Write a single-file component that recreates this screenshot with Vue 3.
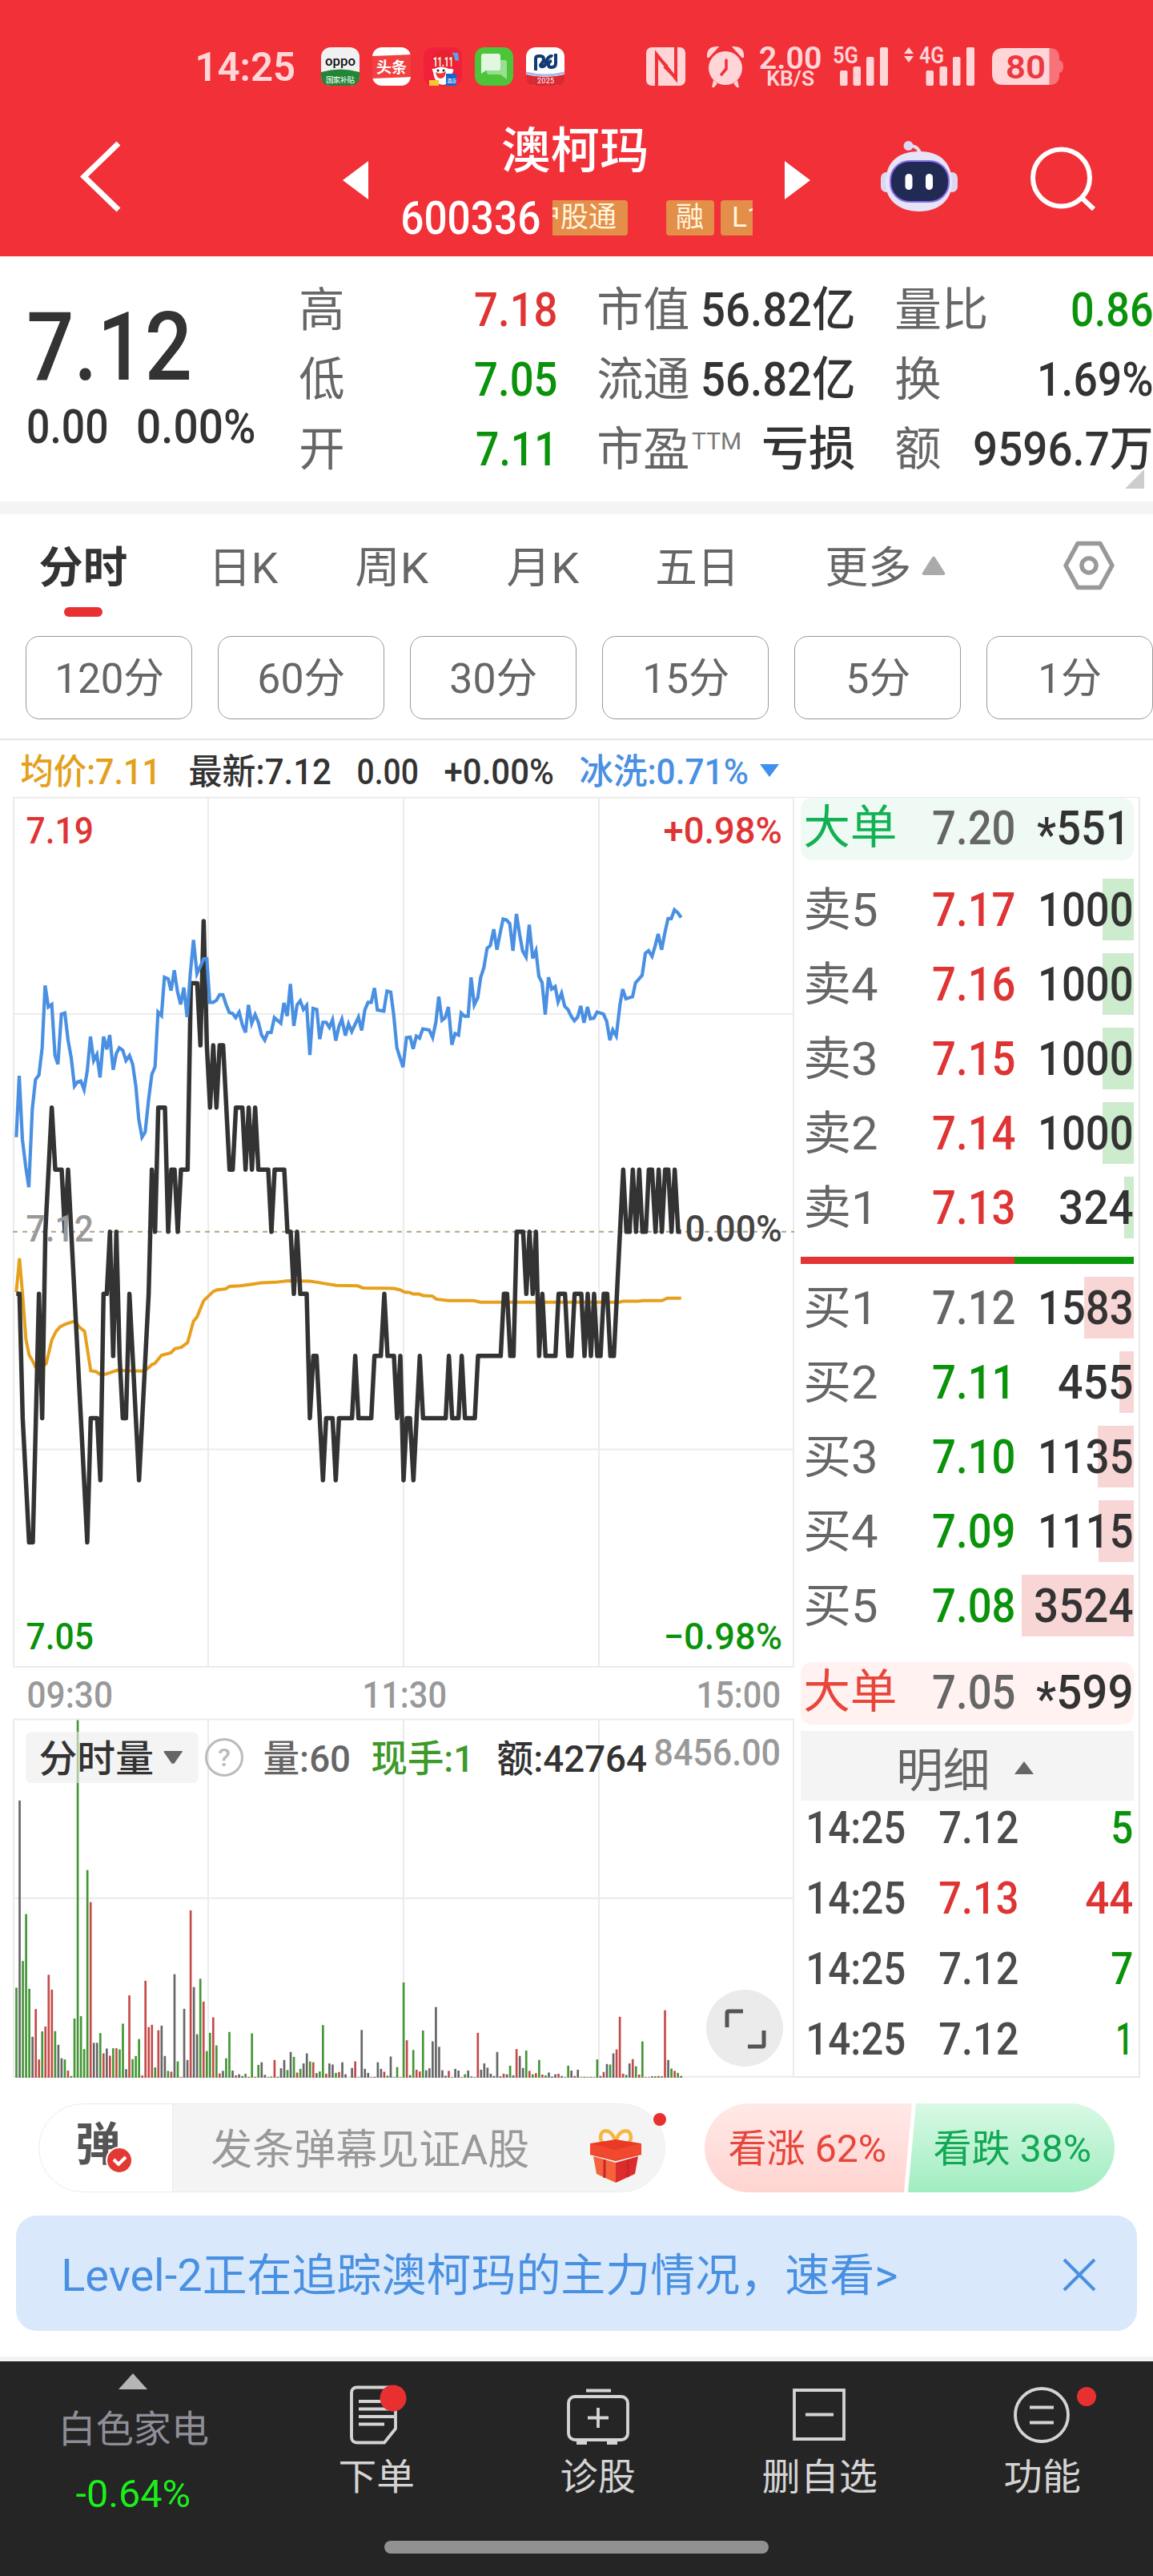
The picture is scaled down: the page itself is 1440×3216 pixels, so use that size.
<script setup>
import { h } from 'vue'

// Single line of text fitted to an exact ink width; its box ends on the baseline.
// A leading asterisk is lowered to sit on the middle of the digits.
const T = (p) =>
  h('svg', { class: 't', width: p.w, height: p.s * 0.72, 'font-size': p.s }, [
    h('text', {
      x: -p.s * 0.032, y: p.s * 0.72, fill: 'currentColor',
      textLength: +p.w + p.s * 0.075, lengthAdjust: 'spacingAndGlyphs', 'xml:space': 'preserve'
    }, p.t[0] === '*'
      ? [h('tspan', { dy: p.s * 0.13 }, '*'), h('tspan', { dy: -p.s * 0.13 }, p.t.slice(1))]
      : p.t)
  ])
T.props = ['t', 'w', 's']

const quotes = [
  [['高', 53, '7.18', 100, 'red'], ['低', 53, '7.05', 100, 'green'], ['开', 53, '7.11', 98, 'green']],
  [['市值', 112, '56.82亿', 189, ''], ['流通', 112, '56.82亿', 189, ''], ['市盈', 112, '亏损', 113, '', 'TTM']],
  [['量比', 113, '0.86', 99, 'green'], ['换', 54, '1.69%', 141, ''], ['额', 54, '9596.7万', 221, '']]
]
const tabs = [['分时', 107], ['日K', 83], ['周K', 88], ['月K', 87], ['五日', 101], ['更多', 104]]
const chips = [['120分', 133], ['60分', 106], ['30分', 106], ['15分', 105], ['5分', 77], ['1分', 76]]
const sells = [
  ['卖5', '7.17', '1000', 115, 39], ['卖4', '7.16', '1000', 115, 39], ['卖3', '7.15', '1000', 115, 39],
  ['卖2', '7.14', '1000', 115, 39], ['卖1', '7.13', '324', 89, 12]
]
const buys = [
  ['买1', '7.12', '1583', 115, 62, 'mid'], ['买2', '7.11', '455', 90, 18, 'green'], ['买3', '7.10', '1135', 115, 45, 'green'],
  ['买4', '7.09', '1115', 115, 44, 'green'], ['买5', '7.08', '3524', 120, 140, 'green']
]
const trades = [['7.12', '5', 24, 'green'], ['7.13', '44', 56, 'red'], ['7.12', '7', 24, 'green'], ['7.12', '1', 18, 'green']]

// Price samples: x position and distance from the previous close in ticks.
const price = '61:-1 73:-1 85:-3 109:-5 123:-5 146:-1 158:-3 170:0 194:2 207:1 231:1 243:0 255:1 279:-1 327:-5 340:-3 364:-3 376:-4 388:-1 400:-1 412:0 424:-2 436:0 448:-2 460:-3 472:-3 485:-1 509:-3 521:-4 545:-2 557:-1 569:1 581:0 593:2 618:2 630:0 642:1 654:1 666:0 678:1 703:1 715:4 739:4 751:3 763:5 775:3 787:2 799:3 811:2 823:3 836:3 860:1 872:1 884:2 908:2 920:1 932:2 944:1 956:2 968:1 1005:1 1017:0 1029:1 1065:1 1077:0 1089:0 1101:-1 1113:0 1125:-1 1149:-1 1161:-3 1174:-2 1186:-2 1210:-4 1222:-3 1246:-3 1258:-4 1270:-3 1319:-3 1331:-2 1343:-3 1391:-3 1403:-2 1427:-2 1440:-1 1452:-2 1476:-2 1488:-3 1500:-2 1512:-4 1524:-3 1536:-3 1549:-4 1573:-2 1585:-3 1670:-3 1682:-2 1694:-3 1718:-3 1730:-2 1742:-3 1779:-3 1791:-2 1876:-2 1888:-1 1900:-1 1912:-2 1924:-2 1936:0 1960:0 1972:-1 1984:0 1996:-1 2008:0 2020:-2 2032:-1 2044:-2 2081:-2 2093:-1 2117:-1 2129:-2 2141:-2 2153:-1 2178:-1 2190:-2 2202:-1 2214:-2 2226:-1 2238:-2 2250:-2 2262:-1 2275:-1 2287:-2 2300:-2 2323:0 2335:1 2347:0 2359:0 2371:1 2383:0 2395:1 2407:0 2420:0 2431:1 2443:1 2456:0 2468:1 2480:0 2492:1 2504:1 2516:0 2528:1 2541:0 2552:0'
  .split(' ').map((p) => { const [x, v] = p.split(':'); return `${x},${875 - v * 121.6}` }).join(' ')

const indicator = '61,690 72,570 84,695 97,750 108,788 121,635 133,577 146,568 158,515 169,393 181,435 194,430 206,530 217,547 230,449 243,447 255,500 267,535 279,590 290,582 303,580 315,597 327,560 339,493 351,540 363,528 375,573 388,493 400,518 411,490 424,558 436,526 447,515 460,520 472,540 485,530 497,547 509,590 520,655 532,690 544,680 557,615 569,567 581,552 592,445 605,452 616,377 630,380 641,403 653,363 665,405 677,430 689,397 701,455 713,370 725,304 738,370 751,355 763,341 775,341 786,426 799,426 811,422 823,411 835,411 847,430 859,446 872,448 883,456 896,445 908,470 920,485 931,431 943,467 956,450 968,465 980,490 992,500 1003,485 1016,485 1028,456 1052,467 1064,427 1076,453 1088,390 1101,472 1113,431 1125,423 1137,440 1149,432 1161,529 1173,438 1187,440 1198,498 1210,465 1222,465 1234,475 1246,460 1258,501 1270,473 1281,459 1294,491 1306,468 1318,483 1343,455 1355,481 1367,441 1379,426 1391,426 1403,398 1414,441 1438,443 1450,404 1464,406 1475,450 1487,515 1510,553 1523,495 1537,494 1548,517 1560,492 1572,496 1584,478 1608,480 1621,495 1633,465 1644,415 1656,461 1668,456 1680,435 1693,509 1705,487 1718,490 1728,447 1741,453 1754,453 1765,377 1777,431 1790,417 1801,377 1813,358 1825,320 1837,315 1850,283 1862,323 1874,290 1885,263 1898,265 1910,272 1922,325 1935,253 1947,293 1958,325 1971,337 1983,274 1996,340 2008,325 2019,375 2031,387 2043,450 2055,377 2067,400 2080,395 2091,425 2104,408 2116,434 2128,440 2140,453 2152,462 2164,455 2176,433 2188,466 2201,435 2212,458 2225,457 2237,445 2261,449 2273,463 2285,500 2296,480 2309,492 2323,430 2333,400 2345,419 2370,415 2381,388 2406,373 2418,330 2430,325 2443,336 2455,315 2466,292 2479,323 2491,290 2503,262 2515,262 2527,245 2540,251 2552,260'
const average = '61,993 73,927 85,1000 97,1085 109,1116 121,1127 133,1140 150,1143 173,1133 194,1087 210,1070 225,1061 245,1056 280,1050 300,1063 317,1070 340,1147 360,1149 380,1156 400,1153 440,1146 470,1147 535,1148 555,1142 569,1135 580,1133 605,1117 640,1112 655,1104 680,1101 703,1092 725,1050 738,1042 763,1010 799,992 811,989 845,987 860,982 900,981 940,978 980,975 1030,974 1080,971 1160,972 1190,974 1210,976 1260,980 1340,981 1360,985 1475,986 1500,989 1515,993 1535,994 1548,997 1570,997 1585,1000 1620,1001 1635,1007 1680,1010 1775,1010 1800,1013 2320,1013 2335,1011 2390,1011 2410,1010 2480,1010 2500,1005 2552,1005'

// One bar per minute: colour key (g falling, r rising, k flat) and height.
const volume = 'g315 k969 g408 g572 g311 k143 r240 r64 g162 r179 r360 r308 g163 k115 k68 g64 r25 g6 g207 g1250 g215 g100 g726 r614 k122 k122 g156 r85 k102 r77 g103 r103 g99 g189 k30 r288 g65 g76 g135 r8 r339 r177 r185 g36 r166 k182 k76 g24 r21 k362 g57 r2 k241 k62 r585 k317 k152 g346 r266 g93 g157 r211 g113 r15 k24 g68 g160 k25 r8 k12 k6 g14 r3 g155 r3 g45 k54 k10 k2 g4 r62 k3 k33 k62 g27 k90 g73 r18 g31 k50 k85 g57 r54 k16 g22 g184 r14 k50 k46 g17 r20 k54 k12 k0 k34 r57 g2 k167 k31 k17 k2 r3 k54 k31 r21 g7 k74 k2 g37 r2 g333 r131 k9 g97 r28 r22 g165 k26 k33 k127 k247 k108 k26 k7 r24 g2 k31 k25 r2 g12 k25 k4 k2 r157 k28 k50 k35 k14 k6 k90 k5 r14 k12 g42 k8 r100 k76 k34 g95 r24 g12 r16 g62 r11 g8 k18 k4 k12 r14 k6 k2 g42 k25 r6 k28 k2 g3 r2 g3 r2 g64 k6 r20 k48 g46 k85 r99 r213 r14 g10 k50 r65 g40 r11 g127 r2 r2 k5 g5 r6 g5 r236 k62 g32 r24 g17 k6'
  .split(' ').map((v, i) => ({ x: 57.5 + i * 12.09, k: v[0], n: +v.slice(1) }))
const ink = { g: '#449636', r: '#c54a48', k: '#666' }
</script>

<template>
  <div class="app">
    <header class="top">
      <div class="status">
        <T t="14:25" w="122" s="50" class="b" />
        <div class="apps">
          <svg width="48" height="48"><rect width="48" height="48" rx="12" fill="#f1f1f1" /><path d="M0 31q24-7 48 0v5q0 12-12 12H12Q0 48 0 36z" fill="#238636" /><text x="5" y="23" font-size="17" textLength="38" lengthAdjust="spacingAndGlyphs" fill="#111" font-weight="500">oppo</text><text x="6" y="43.500" font-size="9.500" textLength="36" fill="#fff">国家补贴</text></svg>
          <svg width="48" height="48"><rect width="48" height="48" rx="12" fill="#fff" /><path d="M0 11L48 9V37L0 39z" fill="#f1403f" /><text x="5" y="32" font-size="19" textLength="38" fill="#fff" font-weight="700">头条</text></svg>
          <svg width="48" height="48"><rect width="48" height="48" rx="12" fill="#f2203a" /><path d="M36 7h7l1 10-8-1z" fill="#57a4e8" /><ellipse cx="25" cy="15" rx="14" ry="11" fill="#e5232c" /><text x="12" y="24" font-size="16" textLength="25" lengthAdjust="spacingAndGlyphs" fill="#fff" font-weight="700">11.11</text><path d="M12 31q-3-5 1-4 9-5 19 0 8-1 4 5 0 14-12 15-10-1-12-16z" fill="#fff" /><path d="M15 31q6 4 13-1-1 9-7 9-5-1-6-8z" fill="#e33" /><circle cx="18" cy="29" r="1.500" fill="#222" /><circle cx="25" cy="29" r="1.500" fill="#222" /><rect x="7" y="41" width="12" height="7" fill="#f7c52c" /><rect x="28" y="33" width="13" height="15" fill="#1766cf" /><text x="29" y="44" font-size="6" fill="#fff">酒店</text></svg>
          <svg width="48" height="48"><rect width="48" height="48" rx="12" fill="#4cc53a" /><path d="M18 16h19q3 0 3 3v21l-8-6H18q-3 0-3-3V19q0-3 3-3z" fill="#9ade93" /><path d="M11 8h18q3 0 3 3v15q0 3-3 3H14l-6 4V11q0-3 3-3z" fill="#e2f7df" /></svg>
          <svg width="48" height="48"><rect width="48" height="48" rx="12" fill="#fff" /><path d="M0 34q24 6 48 0v4q0 10-12 10H12Q0 48 0 37z" fill="#d82a34" /><path d="M0 32q24 6 48 0" stroke="#a9b9e8" stroke-width="3" fill="none" /><path d="M12 29V14q0-3 4-3h2q4 0 4 4 0 3-3 6-2 2 0 3 4 1 6-4 0-4 3-7 3-3 5-1" fill="none" stroke="#123a73" stroke-width="4" /><path d="M37 8v12q0 5-5 5-5 0-4-4 0-3 4-4" fill="none" stroke="#123a73" stroke-width="4" /><text x="14" y="45" font-size="9" textLength="21" fill="#fff">2025</text></svg>
        </div>
        <svg class="nfc" width="49" height="48" viewBox="0 0 49 48"><rect width="49" height="48" rx="7" fill="currentColor" /><path d="M13 48V9L37 39V0M13 10L26 24M37 38L23 24" fill="none" stroke="#f13038" stroke-width="4" /></svg>
        <svg class="alarm" width="48" height="52" viewBox="0 0 48 52"><g fill="currentColor"><circle cx="24" cy="28" r="21" /><path d="M2 14Q1 2 14 2L3 14zM46 14Q47 2 34 2l11 12z" stroke="currentColor" stroke-width="2" /><path d="M9 43l5 4-4 5H7zM39 43l-5 4 4 5h3z" /></g><path d="M25 18v11l-6 7" fill="none" stroke="#f13038" stroke-width="3.500" stroke-linecap="round" /></svg>
        <div class="speed b"><T t="2.00" w="76" s="38" /><T t="KB/S" w="58" s="25" /></div>
        <svg class="sig" width="68" height="50" viewBox="0 0 68 50" fill="currentColor"><text x="-1" y="21" font-size="29" textLength="32" lengthAdjust="spacingAndGlyphs" font-weight="600">5G</text><rect x="8" y="30" width="9.500" height="19" rx="2" /><rect x="24.500" y="25" width="9.500" height="24" rx="2" /><rect x="41" y="13" width="9.500" height="36" rx="2" /><rect x="58" y="1" width="10" height="48" rx="2" /></svg>
        <svg class="sig2" width="88" height="50" viewBox="0 0 88 50" fill="currentColor"><path d="M0 9L6 1l6 8zM0 12h12l-6 8z" /><text x="19" y="21" font-size="29" textLength="31" lengthAdjust="spacingAndGlyphs" font-weight="600">4G</text><rect x="27.500" y="30" width="9.500" height="19" rx="2" /><rect x="44.500" y="25" width="9.500" height="24" rx="2" /><rect x="61" y="13" width="9.500" height="36" rx="2" /><rect x="78" y="1" width="10" height="48" rx="2" /></svg>
        <svg class="bat" width="88" height="46" viewBox="0 0 88 46"><path d="M71 0h1q12 0 12 12v3q5 1 5 8t-5 8v3q0 12-12 12h-1z" fill="#f87279" /><path d="M14 0h57.500v46H14Q0 46 0 32V14Q0 0 14 0z" fill="currentColor" /><text x="17" y="38" font-size="41" textLength="50" lengthAdjust="spacingAndGlyphs" fill="#ec3840" font-weight="600">80</text></svg>
      </div>
      <nav class="nav">
        <svg class="back" width="52" height="100" viewBox="100 175 52 100"><path d="M148 179L105 220.500 148 262" fill="none" stroke="#fff" stroke-width="7" /></svg>
        <svg class="prev" width="32" height="48"><path d="M32 0v48L0 24z" fill="#fff" /></svg>
        <div class="stock">
          <T t="澳柯玛" w="180" s="61.500" class="name m" />
          <div class="code">
            <T t="600336" w="171" s="57" class="m" />
            <div class="tags"><span class="first">沪股通</span><span class="two">融</span><span>L1</span></div>
          </div>
        </div>
        <svg class="next" width="32" height="48"><path d="M0 0v48L32 24z" fill="#fff" /></svg>
        <svg class="robot" width="96" height="100" viewBox="0 0 96 100">
          <path d="M36 7q13 0 14 15" fill="none" stroke="#e5e0f5" stroke-width="4" /><circle cx="34.500" cy="7" r="6" fill="#dcdaf4" />
          <rect y="40" width="14" height="25" rx="7" fill="#ddd8f2" /><rect x="82" y="40" width="14" height="25" rx="7" fill="#ddd8f2" />
          <path d="M48 14C78 14 89 32 89 53S73 89 48 89 6 75 6 53 18 14 48 14z" fill="#e6e4f6" />
          <rect x="12" y="26" width="73" height="51" rx="24" fill="#202a52" stroke="#8b6bea" stroke-width="2" /><rect x="30.500" y="42" width="9" height="20" rx="4.500" fill="#fff" /><rect x="56" y="42" width="9" height="20" rx="4.500" fill="#fff" />
        </svg>
        <svg class="search" width="84" height="100" viewBox="1284 175 84 100" fill="none" stroke="#fff" stroke-width="6"><circle cx="1325.500" cy="222" r="35.500" /><path d="M1351 247l15 14" /></svg>
      </nav>
    </header>

    <section class="quote">
      <div class="last m"><T t="7.12" w="198" s="118" class="big" /><div><T t="0.00" w="98" s="60" /><T t="0.00%" w="145" s="60" /></div></div>
      <div v-for="(col, i) in quotes" :key="i" class="col">
        <div v-for="q in col" :key="q[0]" class="qrow">
          <T :t="q[0]" :w="q[1]" s="58" class="lab" /><T v-if="q[5]" :t="q[5]" w="60" s="29" class="ttm" /><T :t="q[2]" :w="q[3]" s="59" :class="['m', 'end', q[4]]" />
        </div>
      </div>
      <svg class="corner" width="24" height="24"><path d="M24 0v24H0z" fill="#ccc" /></svg>
    </section>

    <section class="periods">
      <div class="tabs">
        <T v-for="(t, i) in tabs" :key="i" :t="t[0]" :w="t[1]" s="54" :class="['tab', { on: i === 0 }]" />
        <svg class="uptri" width="30" height="24"><path d="M13 2q2-3 4 0l12 19q1 3-2 3H3q-3 0-2-3z" fill="#aaa" /></svg>
        <svg class="hex" width="64" height="62" viewBox="0 0 64 62" fill="none" stroke="#999" stroke-width="5.500" stroke-linejoin="round"><path d="M18 3.500h28L61 31 46 58.500H18L3 31z" /><circle cx="32" cy="31" r="9" /></svg>
      </div>
      <i class="under" />
      <div class="chips"><span v-for="c in chips" :key="c[0]"><T :t="c[0]" :w="c[1]" s="52" /></span></div>
    </section>

    <div class="info m">
      <T t="均价:7.11" w="172" s="44" class="gold" /><T t="最新:7.12" w="175" s="44" /><T t="0.00" w="74" s="44" /><T t="+0.00%" w="134" s="44" /><T t="冰洗:0.71%" w="208" s="44" class="blue" />
      <svg class="down" width="24" height="16"><path d="M0 0h24L12 16z" fill="#4091ee" /></svg>
    </div>

    <main class="market">
      <div class="charts">
        <div class="chart">
          <svg class="fill" viewBox="48 24 2928 1704.400" preserveAspectRatio="none">
            <g class="grid"><path d="M51 24V1728M780 24V1728M1512 24V1728M2244 24V1728M2973 24V1728M48 25H2976M48 449H2976M48 1301H2976M48 1727H2976" /></g>
            <path class="dash" d="M48 875H2976" />
            <polyline :points="average" stroke="#e6a01c" stroke-width="4" /><polyline :points="price" stroke="#333" stroke-width="5.500" stroke-linejoin="round" /><polyline :points="indicator" stroke="#4a90e2" stroke-width="4.200" />
          </svg>
          <T t="7.19" w="81" s="46" class="m red tl" /><T t="+0.98%" w="145" s="46" class="m red tr" />
          <T t="7.12" w="81" s="46" class="m pale ml" /><T t="0.00%" w="118" s="46" class="m mr" />
          <T t="7.05" w="81" s="46" class="m green bl" /><T t="−0.98%" w="145" s="46" class="m green br" />
        </div>
        <div class="times m"><T t="09:30" w="104" s="47" /><T t="11:30" w="102" s="47" /><T t="15:00" w="102" s="47" /></div>
        <div class="volume">
          <svg class="fill" viewBox="48 238 2928 1257.200" preserveAspectRatio="none">
            <g class="grid"><path d="M51 241V1493M780 241V1493M1512 241V1493M2244 241V1493M2973 241V1493M48 242H2976M48 867H2976M48 1492H2976" /></g>
            <rect v-for="(b, i) in volume" :key="i" :x="b.x" :y="1495 - b.n" width="8" :height="b.n" :fill="ink[b.k]" />
          </svg>
          <div class="vhead m">
            <span class="pick"><T t="分时量" w="140" s="47" /><svg width="24" height="16"><path d="M1 0h22q2 0 0 2L14 15q-2 2-4 0L1 2q-1-2 0-2z" fill="#666" /></svg></span>
            <svg class="help" width="48" height="48"><circle cx="24" cy="24" r="22.500" fill="none" stroke="#bbb" stroke-width="3" /><text x="24" y="35" font-size="32" text-anchor="middle" fill="#bbb">?</text></svg>
            <T t="量:60" w="106" s="47" class="mid" /><T t="现手:1" w="125" s="47" class="leaf" /><T t="额:42764" w="184" s="47" /><T t="8456.00" w="155" s="47" class="pale max" />
          </div>
          <svg class="expand" width="96" height="96"><circle cx="48" cy="48" r="48" fill="#ebebeb" /><path d="M46 27H28q-2 0-2 2v18M52 71h18q2 0 2-2V51" fill="none" stroke="#555" stroke-width="5" /></svg>
        </div>
      </div>

      <aside class="book">
        <div class="brow bigsell"><T t="大单" w="113" s="58" class="jade lift" /><T t="7.20" w="100" s="59" class="px m mid" /><T t="*551" w="112" s="59" class="m qty q2" /></div>
        <div v-for="r in sells" :key="r[0]" class="brow lvl">
          <i class="bar sell" :style="{ width: r[4] + 'px' }" /><T :t="r[0]" w="89" s="58" class="lab" /><T :t="r[1]" w="100" s="59" class="px m red" /><T :t="r[2]" :w="r[3]" s="59" class="m qty" />
        </div>
        <div class="ratio"><i /></div>
        <div v-for="r in buys" :key="r[0]" class="brow lvl">
          <i class="bar buy" :style="{ width: r[4] + 'px' }" /><T :t="r[0]" w="89" s="58" class="lab" /><T :t="r[1]" w="100" s="59" :class="['px', 'm', r[5]]" /><T :t="r[2]" :w="r[3]" s="59" class="m qty" />
        </div>
        <div class="brow bigbuy"><T t="大单" w="113" s="58" class="ruby lift" /><T t="7.05" w="100" s="59" class="px m mid" /><T t="*599" w="117" s="59" class="m qty" /></div>
        <div class="detail"><T t="明细" w="113" s="58" /><svg width="24" height="16"><path d="M12 0l12 16H0z" fill="#666" /></svg></div>
        <div v-for="(r, i) in trades" :key="i" class="trade m"><T t="14:25" w="121" s="55" class="mid4" /><T :t="r[0]" w="96" s="55" :class="['tp', r[3] === 'red' ? 'red' : 'mid4']" /><T :t="r[1]" :w="r[2]" s="55" :class="['end', r[3]]" /></div>
      </aside>
    </main>

    <section class="social">
      <div class="danmu">
        <div class="dbtn"><T t="弹" w="52" s="57" /><svg width="36" height="36"><circle cx="18" cy="18" r="16" fill="#e23a33" stroke="#fff" stroke-width="2" /><path d="M11 17l6 6 9-9" fill="none" stroke="#fff" stroke-width="4" /></svg></div>
        <div class="dinput"><T t="发条弹幕见证A股" w="394" s="52" />
          <svg class="gift" width="66" height="68" viewBox="0 0 66 68"><path d="M33 20Q14 22 14 10 15 0 24 3q8 4 9 17Q34 6 42 3q9-3 10 7 0 12-19 10z" fill="none" stroke="#f5b740" stroke-width="4.500" /><path d="M1 18l32-5 32 5v14L33 40 1 32z" fill="#e93a26" /><path d="M1 18l32 8 32-8v13L33 39 1 31z" fill="#f0492f" /><path d="M5 34l28 8v25L9 56z" fill="#f4633b" /><path d="M33 42l28-8-4 22-24 11z" fill="#dd2a2a" /><path d="M19 38v23M48 38v22" stroke="#c9262a" stroke-width="3" /></svg>
        </div>
        <i class="dot" />
      </div>
      <div class="vote">
        <svg class="fill" width="512" height="111" viewBox="0 0 512 111"><defs><linearGradient id="up" x2="0" y2="1"><stop stop-color="#ffe9e8" /><stop offset="1" stop-color="#ffd4d0" /></linearGradient><linearGradient id="dn" x2="0" y2="1"><stop stop-color="#d9f9e6" /><stop offset="1" stop-color="#a0edc0" /></linearGradient></defs><path d="M55.500 0H259L249 111H55.500A55.500 55.500 0 0 1 55.500 0z" fill="url(#up)" /><path d="M264 0H456.500a55.500 55.500 0 0 1 0 111H254z" fill="url(#dn)" /></svg>
        <T t="看涨 62%" w="194" s="48" class="ruby v1" /><T t="看跌 38%" w="194" s="48" class="jade2 v2" />
      </div>
    </section>

    <section class="banner"><T t="Level-2正在追踪澳柯玛的主力情况，速看>" w="1041" s="56" /><svg width="40" height="40" stroke="#4a90e2" stroke-width="4"><path d="M1 1l38 38M39 1L1 39" /></svg></section>

    <footer class="foot">
      <div class="fi idx"><svg width="36" height="20"><path d="M18 0l18 20H0z" fill="#b5b5b5" /></svg><T t="白色家电" w="185" s="47" class="f1" /><T t="-0.64%" w="140" s="48" class="f2" /></div>
      <div class="fi"><svg width="110" height="80" viewBox="0 0 110 80"><path d="M31 5.500h41q7 0 7 7V57L65 74.500H31q-7 0-7-7v-55q0-7 7-7zM33 23h36M33 32.500h38M33 42h44M33 51.500h32" /><circle class="fdot" cx="76" cy="19" r="16.500" /></svg><T t="下单" w="92" s="46" /></div>
      <div class="fi"><svg width="110" height="80" viewBox="0 0 110 80"><rect x="19" y="17" width="74" height="54" rx="8" /><path d="M41 9.500h31M56 31v25M43 43.500h26M29 75h13M67 75h13" /></svg><T t="诊股" w="91" s="46" /></div>
      <div class="fi"><svg width="110" height="80" viewBox="0 0 110 80"><path d="M24 9h62v61H24zM38 39.500h35" /></svg><T t="删自选" w="141" s="46" /></div>
      <div class="fi"><svg width="110" height="80" viewBox="0 0 110 80"><circle cx="55" cy="40" r="33" /><path d="M40 30.500h30M40 49.500h30" /></svg><T t="功能" w="93" s="46" /><i class="dot2" /></div>
      <i class="home" />
    </footer>
  </div>
</template>

<style>
body { background: #fff; }
svg.t { display: block; flex: none; overflow: visible; }
</style>
<style scoped>
.app { width: 1440px; height: 3216px; overflow: hidden; background: #fff; color: #333; font-family: Roboto, "Noto Sans CJK SC", sans-serif; }
.app *, .app { box-sizing: border-box; }
svg { display: block; flex: none; overflow: visible; }
.m { font-weight: 500; }
.b { font-weight: 600; }
.red { color: #df3434; }
.green { color: #0a930a; }
.mid { color: #666; }
.mid4 { color: #4c4c4c; }
.pale { color: #999; }
.blue { color: #4a90e2; }
.gold { color: #e3a01b; }
.leaf { color: #3d9a29; }
.jade { color: #12b155; }
.jade2 { color: #12a854; }
.ruby { color: #e8453b; }
.end { margin-left: auto; }

.top { height: 320px; background: #f13038; color: #ffd5d7; }
.status { height: 130px; padding: 36px 0 0 245px; display: flex; align-items: center; }
.apps { display: flex; gap: 16px; margin: 0 102px 0 34px; }
.alarm { margin-left: 26px; }
.speed { width: 77px; margin-left: 18px; display: flex; flex-direction: column; align-items: center; gap: 3px; }
.sig { margin-left: 16px; }
.sig2 { margin-left: 20px; }
.bat { margin-left: 22px; }
.nav { height: 190px; padding-left: 100px; display: flex; align-items: center; color: #fff; }
.prev { margin: 0 42px 0 276px; }
.stock { width: 438px; height: 138px; padding-top: 10px; }
.name { margin-left: 126px; }
.code { display: flex; align-items: flex-end; height: 44px; margin-top: 40px; }
.code > svg { margin-bottom: 2px; }
.tags { width: 250px; height: 44px; margin-left: 17px; display: flex; overflow: hidden; }
.tags span { flex: none; width: 60px; padding-left: 14px; background: #e38e49; color: #fff5dd; border-radius: 4px; font-size: 35px; line-height: 43px; white-space: nowrap; }
.tags .first { width: 133px; margin: 0 48px 0 -39px; }
.tags .two { margin-right: 8px; padding-left: 12px; }
.next { margin: 0 88px 0 40px; }
.search { margin-left: 88px; }

.quote { position: relative; height: 322px; display: flex; border-bottom: 16px solid #f4f4f4; }
.last { width: 375px; padding: 69px 0 0 37px; }
.last > div { display: flex; gap: 39px; margin: 36px 0 0 -2px; }
.col { width: 319px; margin-right: 53px; }
.col:nth-child(4) { margin-right: 0; }
.qrow { height: 87px; display: flex; align-items: flex-end; }
.lab { color: #666; }
.ttm { margin: 0 0 20px 6px; color: #777; }
.corner { position: absolute; left: 1405px; top: 266px; }

.periods { height: 282px; border-bottom: 2px solid #e5e5e5; color: #666; }
.tabs { height: 89px; padding-left: 50px; display: grid; grid-template-columns: 212px 183px 189px 186px 212px 119px 177px 64px; align-items: end; }
.tab { margin-bottom: 3px; }
.on { font-weight: 700; color: #333; }
.uptri { margin-bottom: 13px; }
.hex { margin-bottom: -6px; }
.under { display: block; width: 48px; height: 12px; margin: 27px 0 24px 80px; border-radius: 6px; background: #e83030; }
.chips { display: flex; gap: 32px; padding-left: 32px; }
.chips span { width: 208px; height: 104px; padding-top: 2px; border: 1.500px solid #999; border-radius: 17px; display: flex; justify-content: center; align-items: center; }
.info { height: 71px; padding: 0 0 16px 27px; display: grid; grid-template-columns: 210px 210px 109px 169px 224px auto; align-items: end; }
.down { margin-bottom: 9px; }

.market { display: flex; padding-left: 16px; height: 1599px; }
.charts { width: 976px; }
.chart, .volume { position: relative; }
.chart { height: 1087px; }
.volume { height: 449px; }
.chart > svg, .volume > svg, .vote > svg { position: absolute; }
.fill { left: 0; top: 0; width: 100%; height: 100%; }
.fill polyline { fill: none; vector-effect: non-scaling-stroke; }
.grid path { fill: none; stroke: #ebebeb; stroke-width: 2; vector-effect: non-scaling-stroke; }
.dash { stroke: #b5a47c; stroke-width: 2; stroke-dasharray: 6 6; vector-effect: non-scaling-stroke; }
.tl { left: 18px; top: 25px; }
.tr { right: 17px; top: 25px; }
.ml { left: 18px; top: 522px; }
.mr { right: 17px; top: 522px; color: #444; }
.bl { left: 18px; top: 1031px; }
.br { right: 17px; top: 1031px; }
.times { height: 63px; padding: 0 19px 13px 19px; display: flex; justify-content: space-between; align-items: flex-end; color: #999; }
.vhead { position: relative; display: flex; align-items: flex-end; height: 67px; padding-left: 16px; }
.pick { width: 216px; height: 64px; margin-bottom: -14px; padding: 0 0 14px 18px; display: flex; align-items: flex-end; border-radius: 8px; background: rgba(236, 236, 236, .6); }
.pick svg + svg { margin: 0 0 10px 14px; }
.help { margin: 0 26px -6px 8px; }
.leaf { margin: 0 32px 0 29px; }
.max { margin: 0 0 8px 12px; }
.expand { left: 866px; top: 339px; }

.book { width: 432px; height: 1599px; padding: 0 7px 0 8px; border: 1px solid #e8e8e8; border-width: 1px 2px 2px 0; }
.brow { position: relative; display: flex; align-items: flex-end; padding: 0 3px 0 5px; width: 416px; }
.brow svg { position: relative; }
.bigsell, .bigbuy { height: 78px; padding-bottom: 20px; border-radius: 14px; }
.bigsell { background: #f0faf5; margin-bottom: 23px; }
.bigbuy { background: #fff2f1; margin-top: 32px; }
.lift { margin-bottom: 1px; }
.lvl { height: 77px; margin-bottom: 16px; padding-bottom: 18px; }
.bar { position: absolute; right: 0; top: 0; height: 77px; }
.sell { background: #cdebcd; }
.buy { background: #f9d6d6; }
.px { position: absolute !important; left: 166px; bottom: inherit; }
.qty { margin-left: auto; }
.q2 { margin-right: 4px; }
.ratio { width: 416px; height: 9px; margin: 23px 0 16px; background: #0a990a; }
.ratio i { display: block; width: 267px; height: 9px; background: #e23434; }
.detail { width: 416px; height: 87px; margin-top: 8px; padding: 0 0 17px 121px; display: flex; align-items: flex-end; background: #f4f4f4; color: #666; }
.detail svg + svg { margin: 0 0 16px 33px; }
.trade { width: 416px; height: 88px; padding: 0 3px 35px 8px; display: flex; align-items: flex-end; }
.tp { margin-left: 45px; }

.social { height: 172px; padding: 32px 0 0 48px; display: flex; }
.danmu { position: relative; display: flex; width: 783px; height: 111px; border: 1px solid #ececec; border-radius: 56px; }
.dbtn { position: relative; width: 167px; padding: 29px 0 0 47px; border-right: 1px solid #ececec; color: #555; font-weight: 700; }
.dbtn svg + svg { position: absolute; left: 82px; top: 52px; }
.dinput { flex: 1; padding: 0 28px 34px 49px; display: flex; align-items: flex-end; justify-content: space-between; background: #f4f4f4; color: #999; border-radius: 0 56px 56px 0; }
.gift { margin-bottom: -24px; }
.dot { position: absolute; right: -2px; top: 11px; width: 16px; height: 16px; border-radius: 50%; background: #e83030; }
.vote { position: relative; width: 512px; height: 111px; margin-left: 49px; display: flex; padding: 38px 0 0 31px; gap: 62px; }
.vote > svg + svg { position: relative; }
.banner { width: 1400px; height: 144px; margin: 0 20px 32px; padding: 0 52px 50px 58px; display: flex; justify-content: space-between; align-items: flex-end; border-radius: 26px; background: #d9e9fb; color: #4a90e2; }

.foot { position: relative; height: 274px; border-top: 6px solid #f3f3f3; padding-left: 0; display: grid; grid-template-columns: 332px 276px 276px 278px 278px; background: #252525; color: #d4d4d4; }
.fi { position: relative; display: flex; flex-direction: column; align-items: center; padding-top: 27px; }
.fi svg:first-child { fill: none; stroke: #d4d4d4; stroke-width: 3.800; }
.fi svg + svg { margin-top: 20px; }
.fi .fdot { fill: #e83030; stroke: none; }
.idx { padding-top: 15px; }
.idx svg:first-child { stroke: none; }
.idx .f1 { margin-top: 32px; color: #8e8e98; }
.idx .f2 { margin-top: 46px; color: #1af01a; }
.dot2 { position: absolute; left: 183px; top: 32px; width: 24px; height: 24px; border-radius: 50%; background: #e83030; }
.home { position: absolute; left: 480px; top: 224px; width: 480px; height: 16px; border-radius: 8px; background: #919191; }
</style>
